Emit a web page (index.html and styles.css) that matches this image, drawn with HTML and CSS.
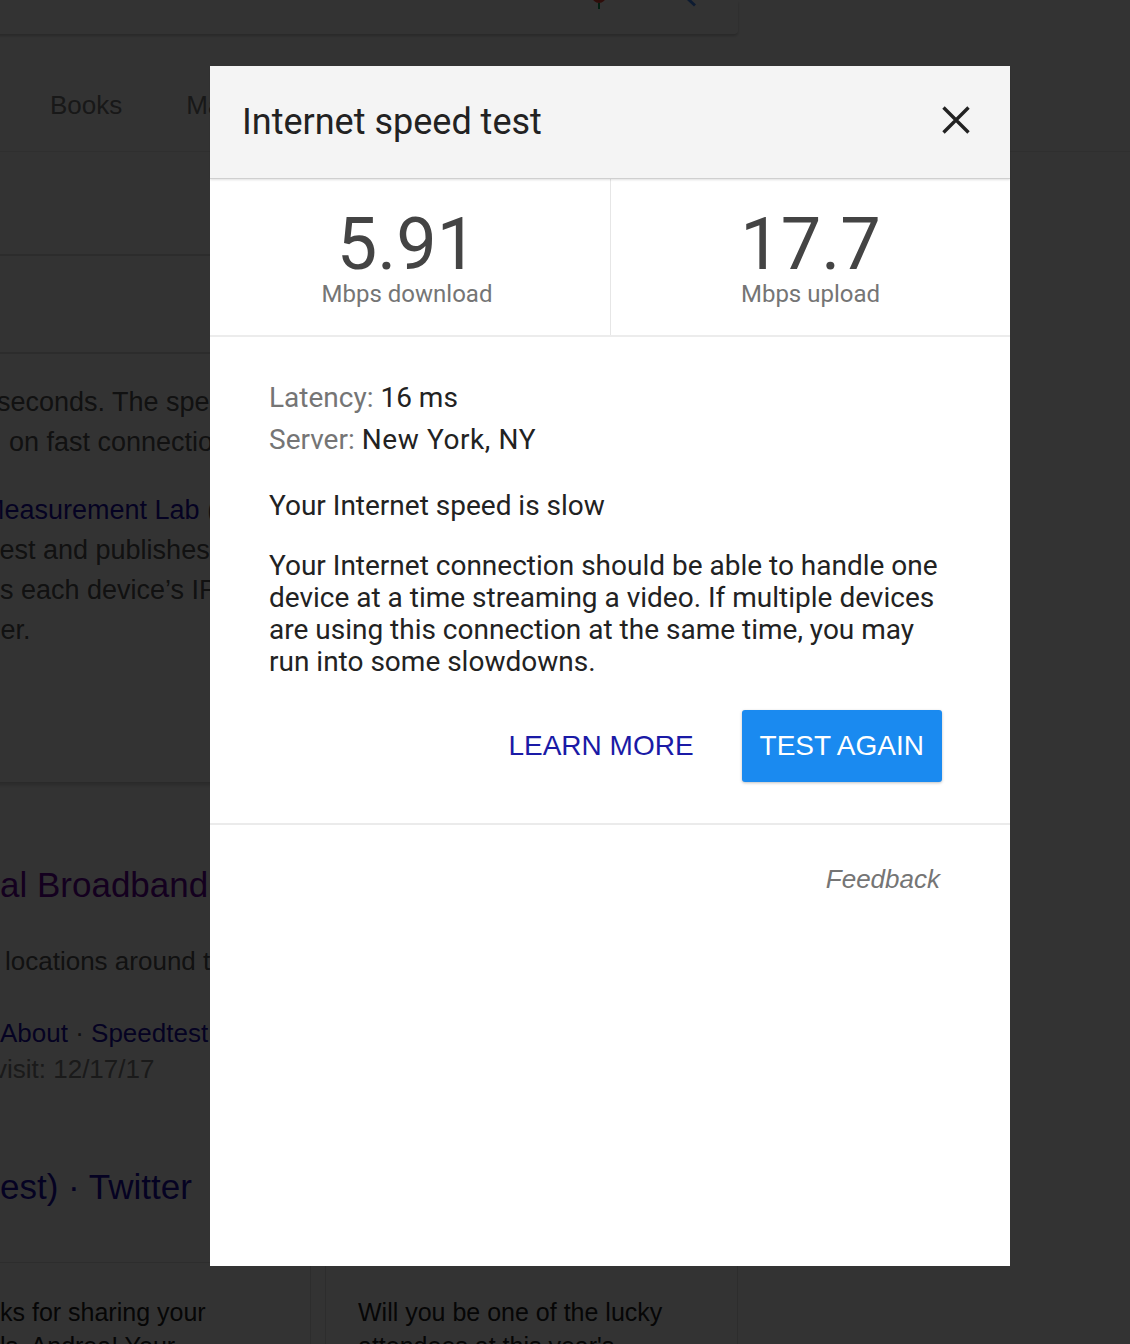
FILE: index.html
```html
<!DOCTYPE html>
<html lang="en">
<head>
<meta charset="utf-8">
<title>Internet speed test</title>
<link rel="stylesheet" href="styles.css">
</head>
<body>
<div class="page">
  <header class="masthead">
    <div class="searchbox">
      <svg class="mic" width="16" height="10" viewBox="0 0 16 10"><circle cx="8" cy="-4" r="7" fill="#ea4335"/><rect x="7" y="3" width="2" height="6" fill="#0f9d58"/></svg>
      <svg class="lens" width="10" height="8" viewBox="0 0 10 8"><line x1="1" y1="-1" x2="8" y2="5.5" stroke="#4285f4" stroke-width="3"/></svg>
    </div>
    <nav class="tabs"><span class="tab">Books</span><span class="tab">Maps</span></nav>
  </header>
  <main class="results">
    <section class="card">
      <div class="card-sec sec-a"></div>
      <div class="card-sec sec-b"></div>
      <div class="card-sec sec-c">
        <p class="snip">
          <span class="ln in-1">seconds. The speed test transfers less than 40 MB</span>
          <span class="ln in-2">on fast connections.</span>
        </p>
        <p class="snip">
          <span class="ln in-3"><a class="lnk">Measurement Lab</a> (M-Lab) and your IP address</span>
          <span class="ln in-4">test and publishes all test results to promote</span>
          <span class="ln in-5">s each device’s IP address and test results</span>
          <span class="ln in-6">user.</span>
        </p>
      </div>
    </section>
    <article class="result">
      <h3 class="r-title visited">al Broadband Speed Test</h3>
      <p class="r-snip"><span class="ln in-7">locations around the world</span></p>
      <p class="r-links"><span class="ln"><a class="lnk">About</a> · <a class="lnk">Speedtest</a></span><span class="ln in-8 muted">visit: 12/17/17</span></p>
    </article>
    <article class="result tw">
      <h3 class="r-title">est) · Twitter</h3>
    </article>
    <div class="carousel">
      <div class="tweet first"><span class="ln">ks for sharing your</span><span class="ln">ls. Andrea! Your</span></div>
      <div class="tweet"><span class="ln">Will you be one of the lucky</span><span class="ln">attendees at this year's</span></div>
    </div>
  </main>
</div>

<div class="scrim"></div>

<div class="dialog" role="dialog" aria-label="Internet speed test">
  <header class="dlg-head">
    <h1 class="dlg-title">Internet speed test</h1>
    <button class="close" aria-label="Close">
      <svg width="28" height="28" viewBox="0 0 28 28"><path d="M1.5 1.5 L26.5 26.5 M26.5 1.5 L1.5 26.5" stroke="#222" stroke-width="3.4" fill="none"/></svg>
    </button>
  </header>
  <div class="stats">
    <div class="stat"><div class="stat-num">5.91</div><div class="stat-label">Mbps download</div></div>
    <div class="stat"><div class="stat-num">17.7</div><div class="stat-label">Mbps upload</div></div>
  </div>
  <div class="dlg-body">
    <div class="meta">
      <div class="meta-row"><span class="meta-key">Latency:</span> 16 ms</div>
      <div class="meta-row"><span class="meta-key">Server:</span> <span class="meta-wide">New York, NY</span></div>
    </div>
    <h2 class="verdict">Your Internet speed is slow</h2>
    <p class="explain">Your Internet connection should be able to handle one device at a time streaming a video. If multiple devices are using this connection at the same time, you may run into some slowdowns.</p>
    <div class="actions">
      <a class="btn-text">LEARN MORE</a>
      <button class="btn-primary">TEST AGAIN</button>
    </div>
  </div>
  <footer class="dlg-foot"><a class="feedback">Feedback</a></footer>
</div>
</body>
</html>
```

FILE: styles.css
```css
* { box-sizing: border-box; }
html, body { margin: 0; padding: 0; }
body {
  background: #ffffff;
  font-family: "Liberation Sans", Arial, sans-serif;
  width: 1130px;
  height: 1344px;
  overflow: hidden;
}

/* ---------- underlying results page ---------- */
.page { width: 1130px; height: 1344px; overflow: hidden; color: #545454; }

.masthead { border-bottom: 1px solid #ebebeb; }
.searchbox {
  width: 758px;
  height: 34px;
  margin-left: -20px;
  background: #fff;
  border-radius: 0 0 4px 0;
  box-shadow: 0 2px 3px rgba(0,0,0,.22);
  display: flex;
  justify-content: flex-end;
  align-items: flex-start;
  padding-right: 41px;
  gap: 80px;
}
.mic { display: block; }
.lens { display: block; }

.tabs {
  height: 117px;
  display: flex;
  align-items: flex-start;
  gap: 64px;
  padding: 56px 0 0 50px;
  font-size: 26px;
  line-height: 30px;
  color: #777;
}

.results { width: 758px; margin-left: -20px; font-size: 26px; }

.card { box-shadow: 0 3px 4px rgba(0,0,0,.2); border-radius: 0 0 4px 4px; }
.card-sec { border-bottom: 2px solid #dcdcdc; }
.sec-a { height: 104px; }
.sec-b { height: 98px; }
.sec-c { height: 428px; border-bottom: none; padding: 28px 0 0 20px; font-size: 27px; }

.snip { margin: 0 0 28px; line-height: 40px; }
.ln { display: block; white-space: nowrap; }
.in-1 { text-indent: -3px; }
.in-2 { text-indent: 9px; }
.in-3 { text-indent: -18px; }
.in-4 { text-indent: -8px; }
.in-5 { text-indent: 0; }
.in-6 { text-indent: -28px; }
.in-7 { text-indent: 5px; }
.in-8 { text-indent: -6px; }
.lnk { color: #1a0dab; }
.muted { color: #808080; }

.result { padding-left: 20px; }
.r-title {
  margin: 81px 0 0;
  font-weight: 400;
  font-size: 35px;
  line-height: 44px;
  color: #1a0dab;
  white-space: nowrap;
}
.r-title.visited { color: #660099; }
.r-snip { margin: 36px 0 0; line-height: 36px; }
.r-links { margin: 36px 0 0; line-height: 36px; }
.tw .r-title { margin-top: 78px; }

.carousel { display: flex; gap: 14px; margin-top: 53px; }
.tweet {
  border: 1px solid #e0e0e0;
  height: 140px;
  padding: 32px 0 0 32px;
  line-height: 34px;
  font-size: 25px;
  color: #222;
}
.tweet.first { width: 331px; padding-left: 20px; border-left: none; }
.tweet:not(.first) { width: 413px; }

/* ---------- scrim ---------- */
.scrim {
  position: fixed;
  inset: 0;
  background: rgba(0,0,0,.8);
}

/* ---------- dialog ---------- */
.dialog {
  position: fixed;
  left: 210px;
  top: 66px;
  width: 800px;
  height: 1200px;
  background: #fff;
  display: flex;
  flex-direction: column;
  font-family: Roboto, "Liberation Sans", Arial, sans-serif;
  color: #222;
}

.dlg-head {
  height: 113px;
  flex: 0 0 auto;
  background: #f4f4f4;
  border-bottom: 1px solid #cfcfcf;
  box-shadow: 0 1px 2px rgba(0,0,0,.12);
  display: flex;
  align-items: center;
  justify-content: space-between;
  padding: 0 40px 0 32px;
  position: relative;
  z-index: 1;
}
.dlg-title { margin: 0; font-size: 36px; font-weight: 400; color: #222; }
.close {
  border: 0;
  background: none;
  padding: 0;
  width: 28px;
  height: 28px;
  margin-top: -4px;
  display: flex;
}

.stats {
  display: flex;
  flex: 0 0 auto;
  height: 158px;
  border-bottom: 2px solid #ececec;
}
.stat {
  flex: 1;
  text-align: center;
  padding-top: 31px;
}
.stat:first-child { border-right: 1px solid #e6e6e6; flex: 0 0 401px; padding-right: 6px; }
.stat-num { font-size: 72px; line-height: 70px; color: #444; }
.stat-label { font-size: 24px; line-height: 24px; color: #757575; margin-top: 2px; }

.dlg-body {
  padding: 40px 60px 41px 59px;
  border-bottom: 2px solid #ebebeb;
  font-size: 28px;
}
.meta-row { line-height: 42px; }
.meta-key { color: #757575; }
.meta-wide { letter-spacing: 0.6px; }
.verdict { margin: 29px 0 0; font-size: 28px; font-weight: 400; line-height: 32px; }
.explain { margin: 28px 0 0; line-height: 32px; }

.actions {
  display: flex;
  justify-content: flex-end;
  align-items: center;
  gap: 48px;
  margin-top: 32px;
  padding-right: 8px;
}
.btn-text {
  font-family: "Liberation Sans", Arial, sans-serif;
  font-size: 28px;
  color: #1a1aa6;
}
.btn-primary {
  font-family: "Liberation Sans", Arial, sans-serif;
  font-size: 28px;
  color: #fff;
  background: #1a8af0;
  border: 0;
  border-radius: 3px;
  height: 72px;
  padding: 0 18px;
  box-shadow: 0 1px 3px rgba(0,0,0,.25);
}

.dlg-foot {
  display: flex;
  justify-content: flex-end;
  padding: 39px 70px 0 0;
}
.feedback {
  font-family: "Liberation Sans", Arial, sans-serif;
  font-style: italic;
  font-size: 26px;
  line-height: 30px;
  color: #757575;
}
```
